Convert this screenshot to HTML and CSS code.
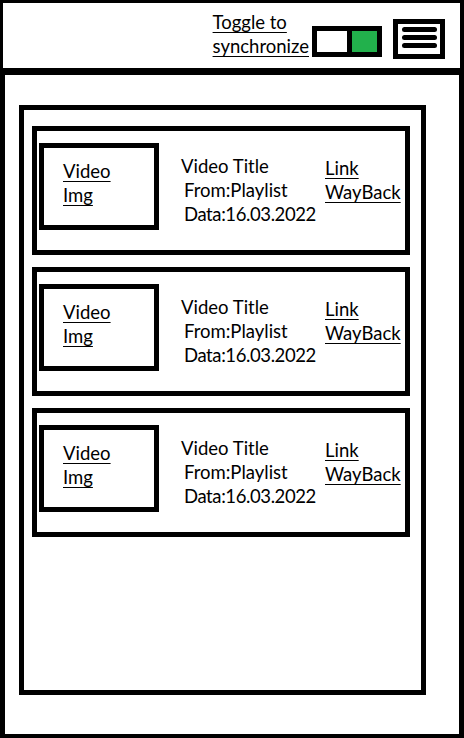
FILE: index.html
```html
<!DOCTYPE html>
<html lang="en">
<head>
<meta charset="utf-8">
<title>Video list</title>
<link rel="stylesheet" href="styles.css">
</head>
<body>
<div class="app">
  <header class="header">
    <a class="sync-link" href="#">Toggle to<br>synchronize</a>
    <div class="toggle"><span class="toggle-off"></span><span class="toggle-on"></span></div>
    <button class="menu" type="button" aria-label="Menu">
      <span class="bar"></span><span class="bar"></span><span class="bar"></span>
    </button>
  </header>
  <main class="main">
    <section class="list">
      <article class="card">
        <div class="thumb"><a href="#">Video</a><br><a href="#">Img</a></div>
        <div class="info">
          <div class="title">Video Title</div>
          <div class="meta">From:Playlist</div>
          <div class="meta date">Data:16.03.2022</div>
        </div>
        <div class="links"><a href="#">Link</a><br><a href="#">WayBack</a></div>
      </article>
      <article class="card">
        <div class="thumb"><a href="#">Video</a><br><a href="#">Img</a></div>
        <div class="info">
          <div class="title">Video Title</div>
          <div class="meta">From:Playlist</div>
          <div class="meta date">Data:16.03.2022</div>
        </div>
        <div class="links"><a href="#">Link</a><br><a href="#">WayBack</a></div>
      </article>
      <article class="card">
        <div class="thumb"><a href="#">Video</a><br><a href="#">Img</a></div>
        <div class="info">
          <div class="title">Video Title</div>
          <div class="meta">From:Playlist</div>
          <div class="meta date">Data:16.03.2022</div>
        </div>
        <div class="links"><a href="#">Link</a><br><a href="#">WayBack</a></div>
      </article>
    </section>
  </main>
</div>
</body>
</html>
```
FILE: styles.css
```css
* { box-sizing: border-box; }
html, body { margin: 0; padding: 0; background: #fff; }
body {
  font-family: Lato, "Liberation Sans", sans-serif;
  font-size: 18.5px;
  line-height: 24px;
  color: #000;
}
a {
  color: #000;
  text-decoration: underline;
  text-decoration-thickness: 1px;
  text-underline-offset: 3px;
}
.app {
  width: 464px;
  height: 738px;
  display: flex;
  flex-direction: column;
}
.header {
  height: 68px;
  flex: none;
  display: flex;
  align-items: flex-start;
  justify-content: flex-end;
  border-top: 3px solid #000;
  border-left: 3px solid #000;
  border-right: 4px solid #000;
  padding-right: 15px;
}
.sync-link {
  margin-top: 7px;
  display: block;
}
.toggle {
  margin-top: 23px;
  margin-left: 3px;
  width: 70px;
  height: 31px;
  border: 5px solid #000;
  display: flex;
}
.toggle-off {
  width: 35px;
  background: #fff;
  border-right: 5px solid #000;
}
.toggle-on {
  flex: 1;
  background: #22b14c;
}
.menu {
  margin-top: 16px;
  margin-left: 11px;
  width: 52px;
  height: 40px;
  border: 5px solid #000;
  background: #fff;
  padding: 3px 0 0 0;
  display: flex;
  flex-direction: column;
  align-items: center;
  gap: 3px;
}
.bar {
  display: block;
  width: 35px;
  height: 5px;
  border-radius: 3px;
  background: #000;
}
.main {
  flex: 1;
  border-top: 7px solid #000;
  border-left: 5px solid #000;
  border-right: 5px solid #000;
  border-bottom: 4px solid #000;
  padding: 30px 0 0 14px;
}
.list {
  width: 407px;
  height: 590px;
  border: 5px solid #000;
  padding: 16px 0 0 8px;
  display: flex;
  flex-direction: column;
  gap: 12px;
}
.card {
  width: 378px;
  height: 129px;
  border: 5px solid #000;
  padding: 12px 0 0 2px;
  display: flex;
  align-items: flex-start;
}
.thumb {
  flex: none;
  width: 120px;
  height: 87px;
  border: 5px solid #000;
  padding: 11px 0 0 19px;
}
.info {
  flex: none;
  width: 144px;
  margin: 11px 0 0 22px;
  white-space: nowrap;
}
.meta { padding-left: 3px; }
.date { letter-spacing: -0.4px; }
.links {
  margin-top: 13px;
  white-space: nowrap;
}
```
